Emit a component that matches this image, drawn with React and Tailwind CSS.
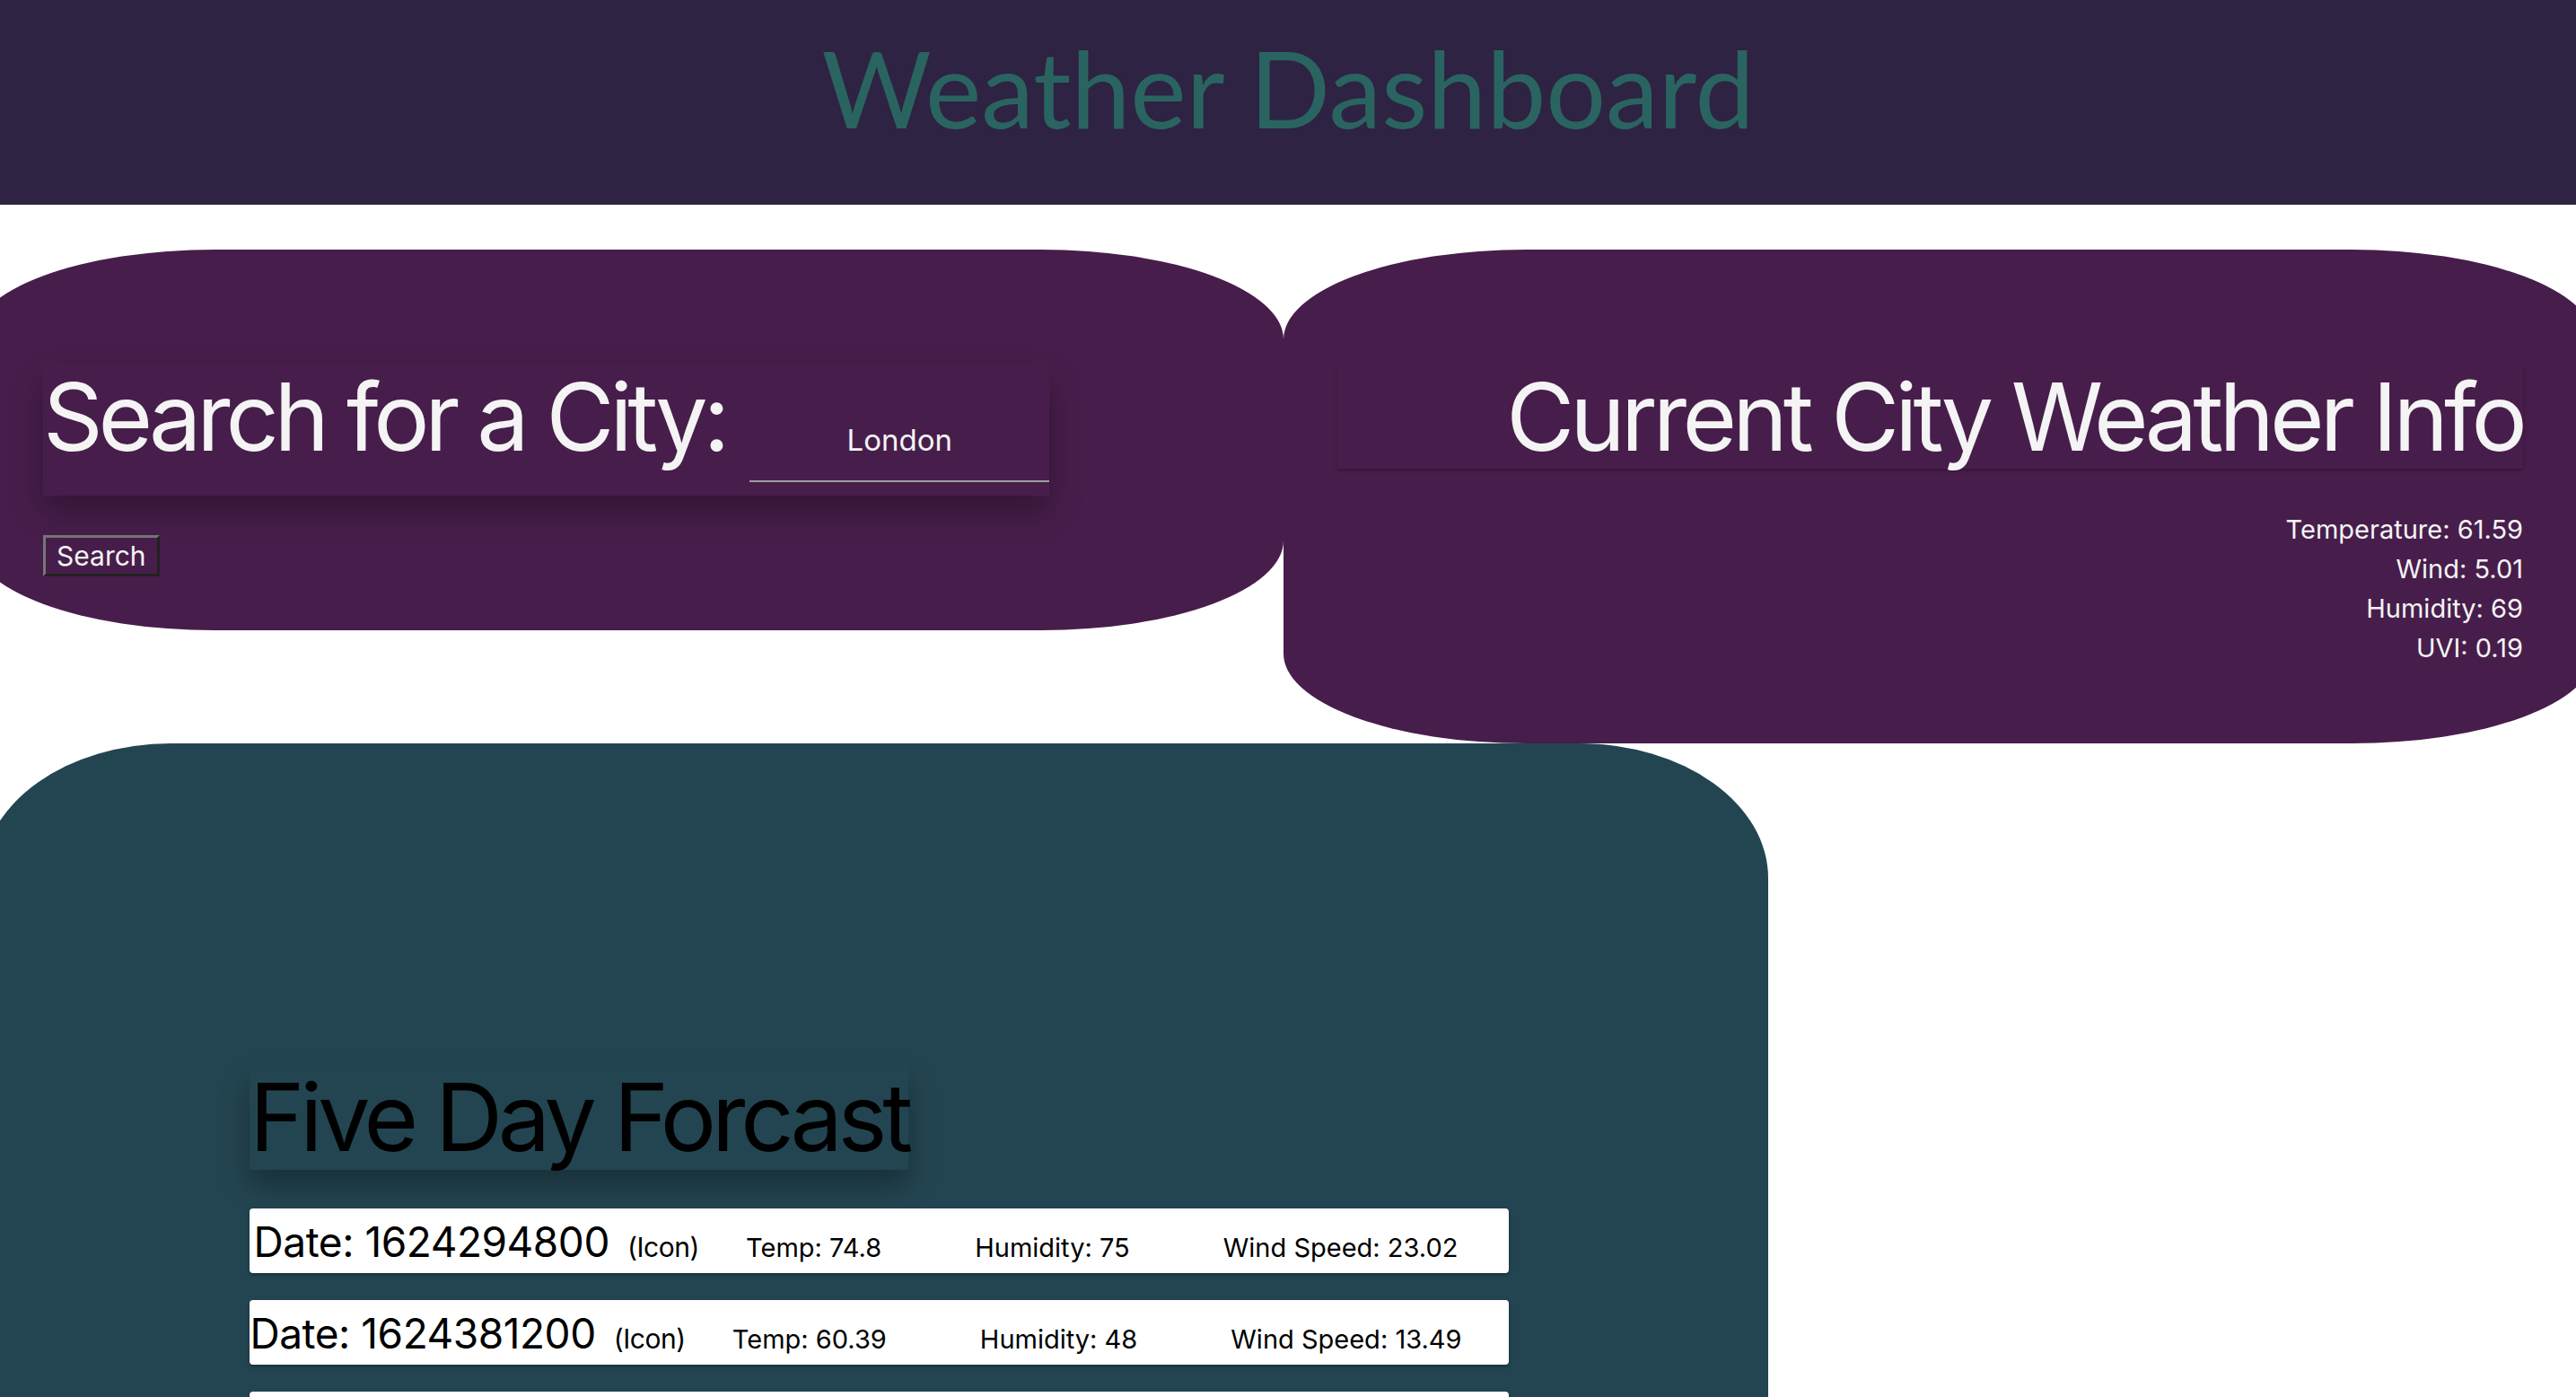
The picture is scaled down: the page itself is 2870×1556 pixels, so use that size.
import React from 'react';

const current = [
  { label: 'Temperature', value: '61.59' },
  { label: 'Wind', value: '5.01' },
  { label: 'Humidity', value: '69' },
  { label: 'UVI', value: '0.19' }
];

const forecast = [
  { dt: 1624294800, temp: 74.8, humidity: 75, wind: 23.02 },
  { dt: 1624381200, temp: 60.39, humidity: 48, wind: 13.49 },
  { dt: 1624467600, temp: 62.11, humidity: 57, wind: 11.83 },
  { dt: 1624554000, temp: 65.3, humidity: 61, wind: 9.86 },
  { dt: 1624640400, temp: 63.72, humidity: 70, wind: 12.4 }
];

function ForecastRow({ day }) {
  return (
    <div className="flex h-[72px] items-baseline justify-center rounded-[4px] bg-white pt-[10px] text-black shadow-[0_2px_4px_rgba(0,0,0,0.35)]">
      <h3 className="text-[46px] leading-[54px] tracking-[-0.01em]">
        Date: {day.dt}
        <span className="ml-[20px] text-[30px]">(Icon)</span>
      </h3>
      <p className="mx-[52px] text-[29px]">Temp: {day.temp}</p>
      <p className="mx-[52px] text-[29px]">Humidity: {day.humidity}</p>
      <p className="mx-[52px] text-[29px]">Wind Speed: {day.wind}</p>
    </div>
  );
}

export default function App() {
  return (
    <div className="h-screen overflow-hidden bg-white font-['Inter','Liberation_Sans',sans-serif]">
      <header className="h-[228px] bg-[#2e2343] pt-[27px] text-center">
        <h1 className="font-['Lato','Open_Sans',sans-serif] text-[118px] leading-[1.2] text-[#2a6461]">
          Weather Dashboard
        </h1>
      </header>

      <div className="-ml-[31px] -mr-[20px] mt-[50px] grid grid-cols-2 items-start">
        <section className="h-[424px] rounded-[270px_/_100px] bg-[#471e4b] pl-[79px] pt-[128px]">
          <div className="inline-flex items-baseline bg-[#471e4b] pb-[15px] shadow-[0_18px_36px_rgba(0,0,0,0.3)]">
            <h2 className="text-[104px] leading-[116px] tracking-[-0.05em] text-[#f4f4f4]">
              Search for a City:
            </h2>
            <input
              type="text"
              readOnly
              value="London"
              className="ml-[27px] w-[334px] border-b-2 border-[#9e9e9e] bg-transparent pb-[25px] text-center text-[33px] leading-[40px] text-[#f4f4f4] outline-none"
            />
          </div>
          <div className="mt-[44px]">
            <button
              type="button"
              className="flex h-[46px] items-center border-[3px] border-b-[#222] border-l-[#777] border-r-[#222] border-t-[#777] px-[12px] text-[30px] leading-none text-[#f4f4f4]"
            >
              Search
            </button>
          </div>
        </section>

        <section className="h-[550px] rounded-[270px_/_100px] bg-[#471e4b] pl-[60px] pr-[79px] pt-[128px] text-right text-[#f4f4f4]">
          <h2 className="bg-[#471e4b] text-[104px] leading-[116px] tracking-[-0.047em] shadow-[0_2px_4px_rgba(0,0,0,0.3)]">
            Current City Weather Info
          </h2>
          <div className="mt-[46px] text-[29px] leading-[44px]">
            {current.map((item) => (
              <p key={item.label}>
                {item.label}: {item.value}
              </p>
            ))}
          </div>
        </section>
      </div>

      <section className="-ml-[20px] w-[1990px] rounded-[210px_/_150px] bg-[#234551] pb-[120px] pt-[358px]">
        <div className="ml-[298px] w-[1403px]">
          <h2 className="inline-block bg-[#234551] text-[104px] leading-[117px] tracking-[-0.05em] text-black shadow-[0_18px_30px_rgba(0,0,0,0.3)]">
            Five Day Forcast
          </h2>
          <div className="mt-[43px] flex flex-col gap-[30px]">
            {forecast.map((day) => (
              <ForecastRow key={day.dt} day={day} />
            ))}
          </div>
        </div>
      </section>
    </div>
  );
}
